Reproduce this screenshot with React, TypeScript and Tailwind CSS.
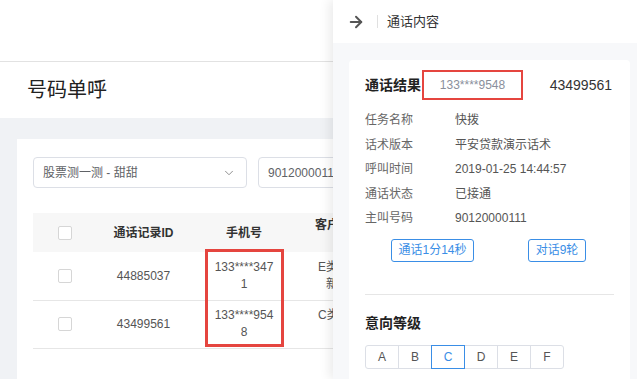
import { ArrowRight, ChevronDown } from 'lucide-react'

const infoRows = [
  { label: '任务名称', value: '快拨' },
  { label: '话术版本', value: '平安贷款演示话术' },
  { label: '呼叫时间', value: '2019-01-25 14:44:57' },
  { label: '通话状态', value: '已接通' },
  { label: '主叫号码', value: '90120000111' },
]

const records = [
  { id: '44885037', phone: '133****3471', tag: 'E类', tag2: '新' },
  { id: '43499561', phone: '133****9548', tag: 'C类', tag2: '' },
]

const levels = ['A', 'B', 'C', 'D', 'E', 'F']

function CallPanel() {
  return (
    <div className="absolute top-0 right-0 h-[379px] w-[304px] bg-[#f7f8fa] shadow-[-4px_0_10px_rgba(0,0,0,0.08)]">
      <div className="flex h-[43px] items-center bg-white pl-[14px]">
        <ArrowRight className="h-[18px] w-[18px] text-[#555]" strokeWidth={2.6} />
        <span className="ml-[12px] h-[13px] w-px bg-[#e0e0e0]" />
        <span className="ml-[9px] text-[13px] text-[#333]">通话内容</span>
      </div>

      <div className="ml-[16px] mt-[17px] w-[281px] rounded-[4px] bg-white px-[16px] pt-[10px] pb-[20px]">
        <div className="flex h-[30px] items-center">
          <span className="text-[14px] font-bold text-[#222]">通话结果</span>
          <span className="ml-[1px] flex h-[30px] w-[101px] items-center justify-center border-2 border-[#e5453f] text-[12px] text-[#8a8f9c]">
            133****9548
          </span>
          <span className="ml-auto mr-[2px] text-[14px] text-[#333]">43499561</span>
        </div>

        <div className="mt-[8px]">
          {infoRows.map((r) => (
            <div key={r.label} className="flex h-[24.5px] items-center text-[12px]">
              <span className="w-[90px] text-[#666]">{r.label}</span>
              <span className="text-[#555]">{r.value}</span>
            </div>
          ))}
        </div>

        <div className="mt-[8px] flex">
          <span className="ml-[26px] flex h-[23px] w-[83px] items-center justify-center rounded-[3px] border border-[#3a8ee6] text-[12px] text-[#3a8ee6]">
            通话1分14秒
          </span>
          <span className="ml-[54px] flex h-[23px] w-[58px] items-center justify-center rounded-[3px] border border-[#3a8ee6] text-[12px] text-[#3a8ee6]">
            对话9轮
          </span>
        </div>

        <div className="mt-[32px] h-px bg-[#e6e6e6]" />

        <div className="mt-[18px] text-[14px] font-bold text-[#222]">意向等级</div>

        <div className="mt-[11px] flex">
          {levels.map((l, i) => (
            <span
              key={l}
              className={
                l === 'C'
                  ? 'relative z-10 -ml-px flex h-[24px] w-[34px] items-center justify-center border border-[#3a8ee6] text-[12px] text-[#3a8ee6]'
                  : i === 0
                    ? 'flex h-[24px] w-[34px] items-center justify-center rounded-l-[3px] border border-[#dcdfe6] text-[12px] text-[#555]'
                    : i === levels.length - 1
                      ? '-ml-px flex h-[24px] w-[34px] items-center justify-center rounded-r-[3px] border border-[#dcdfe6] text-[12px] text-[#555]'
                      : '-ml-px flex h-[24px] w-[34px] items-center justify-center border border-[#dcdfe6] text-[12px] text-[#555]'
              }
            >
              {l}
            </span>
          ))}
        </div>
      </div>
    </div>
  )
}

export default function App() {
  return (
    <div
      className="relative h-[379px] w-[637px] overflow-hidden bg-[#f0f2f5]"
      style={{ fontFamily: '"Liberation Sans", "Noto Sans CJK SC", sans-serif' }}
    >
      <div className="h-[62px] border-b border-[#e2e2e2] bg-white" />
      <div className="flex h-[56px] items-center bg-white pl-[27px]">
        <h1 className="text-[20px] text-[#222]">号码单呼</h1>
      </div>

      <div className="ml-[17px] mt-[21px] h-[260px] w-[316px] overflow-hidden bg-white pl-[16px] pt-[18px]">
        <div className="flex">
          <div className="flex h-[31px] w-[214px] shrink-0 items-center rounded-[4px] border border-[#dcdfe6] pl-[9px] pr-[10px]">
            <span className="text-[12px] text-[#606266]">股票测一测 - 甜甜</span>
            <ChevronDown className="ml-auto h-[14px] w-[14px] text-[#888]" strokeWidth={1.6} />
          </div>
          <div className="ml-[11px] flex h-[31px] w-[200px] shrink-0 items-center rounded-[4px] border border-[#dcdfe6] pl-[9px]">
            <span className="text-[12px] text-[#606266]">9012000011</span>
          </div>
        </div>

        <table className="mt-[25px] w-[400px] table-fixed border-collapse text-[12px]">
          <thead>
            <tr className="h-[39px] bg-[#f7f7f7] text-[#333]">
              <th className="w-[64px] font-bold">
                <span className="mx-auto block h-[14px] w-[14px] rounded-[2px] border border-[#d6d6d6] bg-white" />
              </th>
              <th className="w-[93px] font-bold">通话记录ID</th>
              <th className="w-[108px] font-bold">手机号</th>
              <th className="w-[135px] pb-[15px] pl-[17px] text-left font-bold">客户</th>
            </tr>
          </thead>
          <tbody>
            {records.map((r) => (
              <tr key={r.id} className="h-[48px] border-b border-[#e6e6e6] text-[#555]">
                <td>
                  <span className="mx-auto block h-[14px] w-[14px] rounded-[2px] border border-[#d6d6d6] bg-white" />
                </td>
                <td className="text-center">{r.id}</td>
                <td className="px-[23px] text-center leading-[17px] break-all">
                  {r.phone}
                </td>
                <td className={r.tag2 ? 'pl-[20px] leading-[17px]' : 'pb-[17px] pl-[20px] leading-[17px]'}>
                  <div>{r.tag}</div>
                  {r.tag2 && <div className="pl-[8px]">{r.tag2}</div>}
                </td>
              </tr>
            ))}
          </tbody>
        </table>
      </div>

      <div className="pointer-events-none absolute left-[205px] top-[249px] h-[98px] w-[79px] border-[3px] border-[#e5453f]" />

      <CallPanel />
    </div>
  )
}
